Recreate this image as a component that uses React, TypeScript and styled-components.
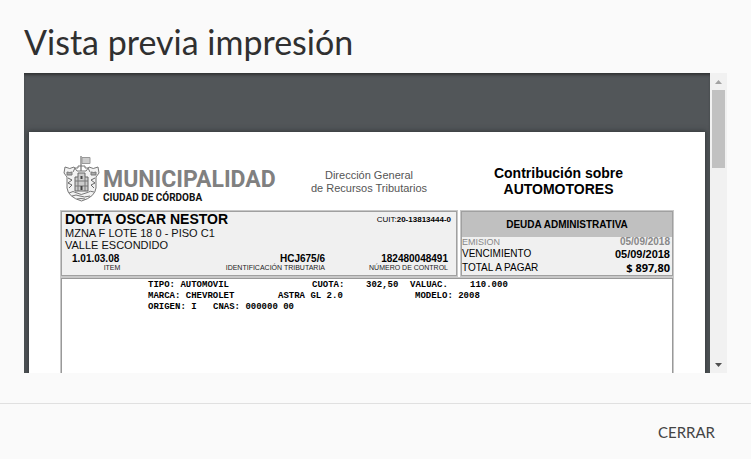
import React from "react";
import styled, { createGlobalStyle } from "styled-components";

const GlobalStyle = createGlobalStyle`
  * { box-sizing: border-box; }
  html { background: #fafafa; }
  body { margin: 0; background: #fafafa; overflow: hidden; font-family: Lato, sans-serif; }
`;

const Dialog = styled.section`
  display: flex;
  flex-direction: column;
  min-height: 100vh;
  background: #fafafa;
`;

const DialogBody = styled.div`
  flex: 1;
  padding: 22px 24px 0;
`;

const Title = styled.h1`
  margin: 0 0 11px;
  font-size: 34px;
  line-height: 40px;
  font-weight: 400;
  color: #303030;
`;

const Footer = styled.footer`
  display: flex;
  justify-content: flex-end;
  align-items: center;
  height: 56px;
  padding: 0 24px;
  border-top: 1px solid #e0e0e0;
`;

const CloseButton = styled.button`
  border: 0;
  padding: 8px 12px;
  background: transparent;
  font: 400 15px/20px Lato, sans-serif;
  color: #444;
  cursor: pointer;
`;

const Viewer = styled.div`
  display: flex;
  height: 300px;
`;

const Canvas = styled.div`
  flex: 1;
  min-width: 0;
  padding: 59px 5px 0;
  overflow: hidden;
  background: #525659;
  box-shadow: inset 0 3px 3px -1px #303234;
`;

const Sheet = styled.article`
  min-height: 950px;
  padding: 23px 31px 0;
  background: #fff;
  box-shadow: 0 0 5px 1px #34383b;
  font-family: "Liberation Sans", Arial, sans-serif;
  color: #000;
`;

const ScrollTrack = styled.div`
  display: flex;
  flex-direction: column;
  align-items: center;
  width: 17px;
  background: #f1f1f1;
`;

const ScrollButton = styled.button`
  display: flex;
  align-items: center;
  justify-content: center;
  width: 17px;
  height: 17px;
  border: 0;
  padding: 0;
  background: transparent;
`;

const ScrollThumb = styled.div`
  width: 13px;
  height: 78px;
  margin-bottom: auto;
  background: #c1c1c1;
`;

const SheetHeader = styled.header`
  display: grid;
  grid-template-columns: 210px minmax(0, 192fr) minmax(0, 209fr);
  height: 55px;
  padding-left: 3px;
`;

const Brand = styled.div`
  display: flex;
  gap: 3px;
`;

const BrandName = styled.div`
  padding-top: 12px;
  font-family: Roboto, sans-serif;
  white-space: nowrap;
`;

const BrandMain = styled.div`
  font-size: 23px;
  line-height: 25px;
  font-weight: 700;
  color: #808080;
`;

const BrandSub = styled.div`
  font-size: 10px;
  line-height: 12px;
  font-weight: 700;
  color: #111;
`;

const Office = styled.div`
  padding-top: 14px;
  text-align: center;
  font-size: 11px;
  line-height: 13px;
  color: #555;
`;

const TaxName = styled.div`
  padding: 10px 22px 0 0;
  text-align: center;
  font-size: 14px;
  line-height: 16px;
  font-weight: 700;
  white-space: nowrap;
`;

const Panels = styled.div`
  display: grid;
  grid-template-columns: minmax(0, 398fr) minmax(0, 214fr);
  gap: 2px;
  height: 66px;
`;

const Panel = styled.section`
  border: 2px solid #a0a0a0;
  outline: 1px solid #c8c8c8;
  outline-offset: -1px;
  background: #f0f0f0;
`;

const Owner = styled.div`
  display: flex;
  justify-content: space-between;
  padding: 0 5px 0 3px;
  font-size: 14px;
  line-height: 15px;
`;

const Address = styled.div`
  padding-left: 3px;
  font-size: 11px;
  line-height: 12px;
  color: #111;
`;

const Cuit = styled.span`
  font-size: 8px;
`;

const Ids = styled.div`
  display: grid;
  grid-template-columns: 80px 1fr 123px;
  padding: 3px 8px 0 10px;
`;

const IdEntry = styled.div<{ $first?: boolean }>`
  text-align: ${(p) => (p.$first ? "center" : "right")};
`;

const IdValue = styled.strong<{ $first?: boolean }>`
  display: block;
  text-align: ${(p) => (p.$first ? "left" : "right")};
  font-size: 10px;
  line-height: 10px;
`;

const IdLabel = styled.span`
  display: block;
  font-size: 7px;
  line-height: 8px;
  color: #222;
`;

const DebtHead = styled.h2`
  margin: 0;
  font-size: 10px;
  line-height: 25px;
  font-weight: 700;
  text-align: center;
  background: #c0c0c0;
`;

const DebtTable = styled.table`
  width: 100%;
  border-collapse: collapse;
`;

const DebtRow = styled.tr<{ $muted?: boolean }>`
  color: ${(p) => (p.$muted ? "#888" : "#000")};
  line-height: ${(p) => (p.$muted ? "10px" : "14px")};
  & > th { font-size: ${(p) => (p.$muted ? "9px" : "10px")}; }
  & > td { font-size: ${(p) => (p.$muted ? "10px" : "11px")}; }
`;

const DebtLabel = styled.th`
  padding: 0;
  text-align: left;
  font-weight: 400;
`;

const DebtValue = styled.td<{ $total?: boolean }>`
  padding: 0 2px 0 0;
  text-align: right;
  font-weight: 700;
  font-family: ${(p) => (p.$total ? '"Open Sans", sans-serif' : "inherit")};
`;

const Details = styled.section`
  min-height: 700px;
  margin-top: 1px;
  padding: 1px 0 0 86px;
  border: 2px solid #999;
  outline: 1px solid #c8c8c8;
  outline-offset: -1px;
  font: 700 9px/11px "Liberation Mono", "Courier New", monospace;
  white-space: pre;
`;

const DetailRow = styled.div<{ $columns: string }>`
  display: grid;
  grid-template-columns: ${(p) => p.$columns};
`;

const CrestDrawing = styled.svg`
  flex: none;
`;

const Crest = () => (
  <CrestDrawing width="37" height="50" viewBox="0 0 37 50" fill="none" stroke="#777" aria-hidden="true">
    <path d="M18 16V1" stroke="#555" />
    <path d="M19 2.500h8v6h-8z" fill="#ccc" stroke="#999" />
    <path d="M2 12q5 3 9 0l3 4h9l3-4q4 3 9 0l1 6-3 4v11q-1 9-14.500 13Q5 42 4 33V22l-3-4z" fill="#f2f2f2" />
    <path d="M10 17l2-4h3v-2h7v2h3l2 4" />
    <path d="M4 17q3 1 5 0v3H4zM28 17q3 1 5 0v3h-5z" fill="#aaa" />
    <path d="M5 23l4 2-4 3 4 2-3 3M32 23l-4 2 4 3-4 2 3 3" stroke="#666" />
    <path d="M12 36V22h3v-4h7v4h3v14z" fill="#ccc" stroke="#666" />
    <path d="M12 26h13M12 31h13M15 22v14M22 22v14" stroke="#777" />
    <path d="M18.500 35v-4M18.500 24v-3" stroke="#444" strokeWidth="2" />
    <path d="M6 38q4-3 8 0t9 0 8-1M9 41q4-2 8 0t10 0M14 44q4-1 8 0" />
  </CrestDrawing>
);

const Arrow = ({ down }: { down?: boolean }) => (
  <svg width="7" height="4" viewBox="0 0 7 4" fill={down ? "#505050" : "#a3a3a3"} aria-hidden="true">
    <path d={down ? "M0 0h7L3.500 4z" : "M0 4h7L3.500 0z"} />
  </svg>
);

export default function App() {
  return (
    <>
      <GlobalStyle />
      <Dialog role="dialog" aria-labelledby="preview-title">
        <DialogBody>
          <Title id="preview-title">Vista previa impresión</Title>
          <Viewer>
            <Canvas>
              <Sheet>
                <SheetHeader>
                  <Brand>
                    <Crest />
                    <BrandName>
                      <BrandMain>MUNICIPALIDAD</BrandMain>
                      <BrandSub>CIUDAD DE CÓRDOBA</BrandSub>
                    </BrandName>
                  </Brand>
                  <Office>Dirección General<br />de Recursos Tributarios</Office>
                  <TaxName>Contribución sobre<br />AUTOMOTORES</TaxName>
                </SheetHeader>
                <Panels>
                  <Panel>
                    <Owner>
                      <strong>DOTTA OSCAR NESTOR</strong>
                      <Cuit>CUIT:<b>20-13813444-0</b></Cuit>
                    </Owner>
                    <Address>MZNA F LOTE 18 0 - PISO C1</Address>
                    <Address>VALLE ESCONDIDO</Address>
                    <Ids>
                      <IdEntry $first>
                        <IdValue $first>1.01.03.08</IdValue>
                        <IdLabel>ITEM</IdLabel>
                      </IdEntry>
                      <IdEntry>
                        <IdValue>HCJ675/6</IdValue>
                        <IdLabel>IDENTIFICACIÓN TRIBUTARIA</IdLabel>
                      </IdEntry>
                      <IdEntry>
                        <IdValue>182480048491</IdValue>
                        <IdLabel>NÚMERO DE CONTROL</IdLabel>
                      </IdEntry>
                    </Ids>
                  </Panel>
                  <Panel>
                    <DebtHead>DEUDA ADMINISTRATIVA</DebtHead>
                    <DebtTable>
                      <tbody>
                        <DebtRow $muted>
                          <DebtLabel scope="row">EMISION</DebtLabel>
                          <DebtValue>05/09/2018</DebtValue>
                        </DebtRow>
                        <DebtRow>
                          <DebtLabel scope="row">VENCIMIENTO</DebtLabel>
                          <DebtValue>05/09/2018</DebtValue>
                        </DebtRow>
                        <DebtRow>
                          <DebtLabel scope="row">TOTAL A PAGAR</DebtLabel>
                          <DebtValue $total>$ 897,80</DebtValue>
                        </DebtRow>
                      </tbody>
                    </DebtTable>
                  </Panel>
                </Panels>
                <Details>
                  <DetailRow $columns="164px 54px 44px 60px 1fr">
                    <span>TIPO: AUTOMOVIL</span>
                    <span>CUOTA:</span>
                    <span>302,50</span>
                    <span>VALUAC.</span>
                    <span>110.000</span>
                  </DetailRow>
                  <DetailRow $columns="130px 137px 1fr">
                    <span>MARCA: CHEVROLET</span>
                    <span>ASTRA GL 2.0</span>
                    <span>MODELO: 2008</span>
                  </DetailRow>
                  <DetailRow $columns="65px 1fr">
                    <span>ORIGEN: I</span>
                    <span>CNAS: 000000 00</span>
                  </DetailRow>
                </Details>
              </Sheet>
            </Canvas>
            <ScrollTrack>
              <ScrollButton aria-label="Desplazar hacia arriba"><Arrow /></ScrollButton>
              <ScrollThumb />
              <ScrollButton aria-label="Desplazar hacia abajo"><Arrow down /></ScrollButton>
            </ScrollTrack>
          </Viewer>
        </DialogBody>
        <Footer>
          <CloseButton type="button">CERRAR</CloseButton>
        </Footer>
      </Dialog>
    </>
  );
}
